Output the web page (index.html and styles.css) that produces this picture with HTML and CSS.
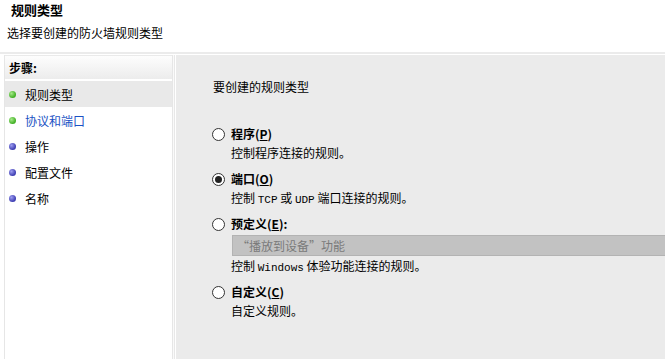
FILE: index.html
```html
<!DOCTYPE html>
<html lang="zh-CN">
<head>
  <meta charset="UTF-8">
  <title>规则类型</title>
  <link rel="stylesheet" href="styles.css">
</head>
<body>
  <div class="header">
    <div class="title">规则类型</div>
    <div class="subtitle">选择要创建的防火墙规则类型</div>
  </div>

  <div class="main">
    <div class="steps">
      <div class="steps-head">步骤:</div>
      <div class="step selected"><span class="dot green"></span>规则类型</div>
      <div class="step link"><span class="dot green"></span>协议和端口</div>
      <div class="step"><span class="dot blue"></span>操作</div>
      <div class="step"><span class="dot blue"></span>配置文件</div>
      <div class="step"><span class="dot blue"></span>名称</div>
    </div>

    <div class="content">
      <div class="question">要创建的规则类型</div>

      <div class="option">
        <div class="opt-label"><span class="radio"></span>程序(<u>P</u>)</div>
        <div class="opt-desc">控制程序连接的规则。</div>
      </div>

      <div class="option">
        <div class="opt-label"><span class="radio checked"></span>端口(<u>O</u>)</div>
        <div class="opt-desc">控制 <span class="mono">TCP</span> 或 <span class="mono">UDP</span> 端口连接的规则。</div>
      </div>

      <div class="option">
        <div class="opt-label"><span class="radio"></span>预定义(<u>E</u>):</div>
        <div class="combo">“播放到设备”功能</div>
        <div class="opt-desc">控制 <span class="mono">Windows</span> 体验功能连接的规则。</div>
      </div>

      <div class="option">
        <div class="opt-label"><span class="radio"></span>自定义(<u>C</u>)</div>
        <div class="opt-desc">自定义规则。</div>
      </div>
    </div>
  </div>
</body>
</html>
```

FILE: styles.css
```css
body {
  margin: 0;
  background: #fff;
  font-family: "Noto Sans CJK SC", "Liberation Sans", sans-serif;
  font-size: 12px;
  color: #000;
  width: 665px;
  height: 361px;
  overflow: hidden;
}

.header {
  box-sizing: border-box;
  height: 54px;
  padding-top: 1px;
  border-bottom: 2px solid #ebebeb;
}

.title {
  font-size: 13px;
  font-weight: bold;
  height: 18px;
  line-height: 18px;
  padding-left: 11px;
}

.subtitle {
  height: 18px;
  line-height: 18px;
  margin-top: 5px;
  padding-left: 7px;
}

.main {
  display: flex;
  margin-top: 1px;
  height: 304px;
}

.steps {
  width: 167px;
  margin-left: 4px;
  border-left: 1px solid #e6e6e6;
  border-right: 1px solid #e6e6e6;
  box-shadow: 1px 0 0 #fafafa, 2px 0 0 #e8e8e8;
}

.steps-head {
  height: 23px;
  line-height: 23px;
  padding-left: 4px;
  font-weight: bold;
  background: linear-gradient(#fdfdfd, #ececec);
  border-top: 1px solid #eaeaea;
  margin-bottom: 2px;
}

.step {
  display: flex;
  align-items: center;
  height: 26px;
  padding-left: 4px;
}

.step.selected {
  background: #e9e9e9;
}

.step.link {
  color: #1a52c4;
}

.dot {
  width: 7px;
  height: 7px;
  border-radius: 50%;
  margin-right: 9px;
}

.dot.green {
  background: radial-gradient(circle at 35% 35%, #a6ea8a, #3fae22 70%);
}

.dot.blue {
  background: radial-gradient(circle at 35% 35%, #9d9df0, #3b3bb0 70%);
}

.content {
  flex: 1;
  margin-left: 3px;
  background: #ebebeb;
  padding: 23px 0 0 37px;
}

.question {
  height: 18px;
  line-height: 18px;
  margin-bottom: 29px;
}

.option {
  margin-bottom: 8px;
}

.opt-label {
  position: relative;
  height: 18px;
  line-height: 18px;
  font-weight: bold;
  padding-left: 18px;
}

.radio {
  position: absolute;
  left: -1px;
  top: 3px;
  width: 11px;
  height: 11px;
  border: 1px solid #333;
  border-radius: 50%;
  background: #fff;
}

.radio.checked::after {
  content: "";
  position: absolute;
  left: 2px;
  top: 2px;
  width: 7px;
  height: 7px;
  border-radius: 50%;
  background: #222;
}

.opt-desc {
  height: 18px;
  line-height: 18px;
  margin-top: 1px;
  padding-left: 18px;
}

.mono {
  font-family: "Liberation Mono", monospace;
  font-size: 11px;
  line-height: 1;
}

.combo {
  margin: 2px 0 0 19px;
  height: 19px;
  line-height: 19px;
  background: #c2c2c2;
  border: 1px solid #b3b3b3;
  border-right: none;
  color: #7a7a7a;
  padding-left: 4px;
}
```
